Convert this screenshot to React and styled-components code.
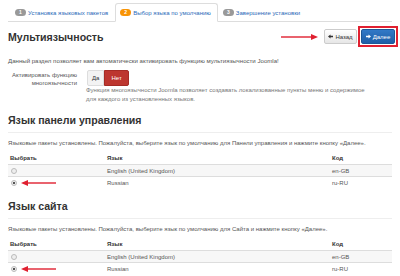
import React from "react";
import styled, { createGlobalStyle } from "styled-components";

const GlobalStyle = createGlobalStyle`
  html, body {
    margin: 0;
    background: #fff;
  }
  body {
    font-family: "Liberation Sans", Arial, sans-serif;
    color: #333;
  }
`;

const Page = styled.div`
  width: 400px;
  height: 276px;
  overflow: hidden;
  padding: 3px 8px 0;
  box-sizing: border-box;
`;

const Tabs = styled.ul`
  display: flex;
  margin: 0;
  padding: 0 0 0 2px;
  list-style: none;
  border-bottom: 1px solid #ddd;
`;

const Tab = styled.li`
  display: flex;
  align-items: center;
  gap: 2px;
  height: 17px;
  padding: 0 6px 0 4px;
  margin-bottom: -1px;
  font-size: 6px;
  color: #2a69b8;
  border: 1px solid ${(p) => (p.$active ? "#ddd" : "transparent")};
  border-bottom-color: ${(p) => (p.$active ? "#fff" : "transparent")};
  border-radius: 3px 3px 0 0;
  background: ${(p) => (p.$active ? "#fff" : "transparent")};
`;

const Badge = styled.span`
  display: inline-block;
  min-width: 7px;
  padding: 1px 2px;
  border-radius: 4px;
  background: ${(p) => p.$color};
  color: #fff;
  font-size: 5px;
  font-weight: bold;
  text-align: center;
  line-height: 5px;
`;

const TitleRow = styled.div`
  display: flex;
  align-items: center;
  justify-content: space-between;
  margin: 2px -6px 0 0;
  height: 25px;
`;

const Title = styled.h2`
  margin: 0;
  font-size: 10.6px;
  font-weight: bold;
  color: #333;
`;

const Actions = styled.div`
  display: flex;
  align-items: center;
  gap: 1px;
`;

const Arrow = styled.svg`
  display: block;
  width: ${(p) => p.$w}px;
  height: 8px;
  margin-right: ${(p) => p.$gap || 0}px;
`;

const Marked = styled.div`
  padding: 1px;
  border: 2px solid #e02030;
`;

const Button = styled.button`
  display: flex;
  align-items: center;
  justify-content: center;
  gap: 2px;
  width: ${(p) => p.$w}px;
  height: 15px;
  padding: 0;
  font-family: inherit;
  font-size: 6px;
  border-radius: 2px;
  border: 1px solid ${(p) => (p.$primary ? "#1d5796" : "#ccc")};
  background: ${(p) =>
    p.$primary
      ? "linear-gradient(#3279c7, #1f5ea6)"
      : "linear-gradient(#fff, #e6e6e6)"};
  color: ${(p) => (p.$primary ? "#fff" : "#333")};
`;

const Icon = styled.svg`
  display: block;
  width: 5px;
  height: 5px;
`;

const Desc = styled.p`
  margin: 8px 0 0;
  font-size: 6.1px;
  color: #555;
`;

const FormRow = styled.div`
  display: flex;
  margin-top: 6px;
`;

const Label = styled.div`
  width: 66px;
  padding-left: 3px;
  padding-top: 2px;
  text-align: right;
  font-size: 6px;
  line-height: 7.5px;
  color: #555;
`;

const Controls = styled.div`
  margin-left: 9px;
`;

const Toggle = styled.div`
  display: flex;
  margin-left: 1px;
`;

const ToggleBtn = styled.span`
  display: flex;
  align-items: center;
  justify-content: center;
  height: 14px;
  padding: 0 ${(p) => (p.$on ? 6 : 4)}px;
  font-size: 6px;
  color: ${(p) => (p.$on ? "#fff" : "#333")};
  background: ${(p) => (p.$on ? "#bd362f" : "#f3f3f3")};
  border: 1px solid ${(p) => (p.$on ? "#a52b25" : "#ddd")};
  border-radius: ${(p) => (p.$on ? "0 2px 2px 0" : "2px 0 0 2px")};
`;

const Help = styled.div`
  margin-top: 0;
  font-size: 6px;
  line-height: 9px;
  color: #777;
`;

const SectionTitle = styled.h3`
  margin: ${(p) => p.$top}px 0 0;
  padding-bottom: 6px;
  font-size: 10.6px;
  font-weight: bold;
  color: #333;
  border-bottom: 1px solid #eee;
`;

const Note = styled.p`
  margin: 7px 0 0;
  font-size: 6px;
  color: #555;
`;

const Table = styled.table`
  width: 100%;
  margin-top: 5px;
  border-collapse: collapse;
  font-size: 6px;
  color: #555;

  th {
    text-align: left;
    font-weight: bold;
    color: #333;
    height: 13px;
    padding: 0 2px;
  }

  td {
    height: 11px;
    padding: 0 2px;
    border-top: 1px solid #ddd;
  }

  tbody tr:nth-child(odd) td {
    background: #f7f7f7;
  }
`;

const Radio = styled.span`
  display: inline-block;
  width: 4px;
  height: 4px;
  border-radius: 50%;
  border: 1px solid #bbb;
  background: ${(p) => (p.$checked ? "radial-gradient(#555 35%, #eee 45%)" : "#eee")};
  vertical-align: middle;
`;

const PickCell = styled.span`
  display: flex;
  align-items: center;
  gap: 4px;
  padding-left: 1px;
`;

const RedArrow = ({ w, gap }) => (
  <Arrow $w={w} $gap={gap} viewBox={`0 0 ${w} 8`}>
    <line x1={gap ? 0 : 6} y1="4" x2={gap ? w - 6 : w} y2="4" stroke="#e02030" strokeWidth="1.4" />
    {gap ? (
      <polygon points={`${w - 7},1 ${w},4 ${w - 7},7`} fill="#e02030" />
    ) : (
      <polygon points="7,1 0,4 7,7" fill="#e02030" />
    )}
  </Arrow>
);

const LeftIcon = () => (
  <Icon viewBox="0 0 10 10">
    <polygon points="0,5 5,1 5,3.5 10,3.5 10,6.5 5,6.5 5,9" fill="currentColor" />
  </Icon>
);

const RightIcon = () => (
  <Icon viewBox="0 0 10 10">
    <polygon points="10,5 5,1 5,3.5 0,3.5 0,6.5 5,6.5 5,9" fill="currentColor" />
  </Icon>
);

const languages = [
  { name: "English (United Kingdom)", code: "en-GB" },
  { name: "Russian", code: "ru-RU", checked: true },
];

const LangTable = () => (
  <Table>
    <colgroup>
      <col style={{ width: "97px" }} />
      <col />
      <col style={{ width: "62px" }} />
    </colgroup>
    <thead>
      <tr>
        <th>Выбрать</th>
        <th>Язык</th>
        <th>Код</th>
      </tr>
    </thead>
    <tbody>
      {languages.map((l) => (
        <tr key={l.code}>
          <td>
            <PickCell>
              <Radio $checked={l.checked} />
              {l.checked && <RedArrow w={35} />}
            </PickCell>
          </td>
          <td>{l.name}</td>
          <td>{l.code}</td>
        </tr>
      ))}
    </tbody>
  </Table>
);

export default function App() {
  return (
    <>
      <GlobalStyle />
      <Page>
        <Tabs>
          <Tab>
            <Badge $color="#999">1</Badge>Установка языковых пакетов
          </Tab>
          <Tab $active>
            <Badge $color="#f89406">2</Badge>Выбор языка по умолчанию
          </Tab>
          <Tab>
            <Badge $color="#999">3</Badge>Завершение установки
          </Tab>
        </Tabs>

        <TitleRow>
          <Title>Мультиязычность</Title>
          <Actions>
            <RedArrow w={37} gap={5} />
            <Button $w={33}>
              <LeftIcon />
              Назад
            </Button>
            <Marked>
              <Button $primary $w={34}>
                <RightIcon />
                Далее
              </Button>
            </Marked>
          </Actions>
        </TitleRow>

        <Desc>
          Данный раздел позволяет вам автоматически активировать функцию мультиязычности Joomla!
        </Desc>

        <FormRow>
          <Label>
            Активировать функцию
            <br />
            многоязычности
          </Label>
          <Controls>
            <Toggle>
              <ToggleBtn>Да</ToggleBtn>
              <ToggleBtn $on>Нет</ToggleBtn>
            </Toggle>
            <Help>
              Функция многоязычности Joomla позволяет создавать локализованные пункты меню и содержимое
              <br />
              для каждого из установленных языков.
            </Help>
          </Controls>
        </FormRow>

        <SectionTitle $top={10}>Язык панели управления</SectionTitle>
        <Note>
          Языковые пакеты установлены. Пожалуйста, выберите язык по умолчанию для Панели управления и нажмите кнопку «Далее».
        </Note>
        <LangTable />

        <SectionTitle $top={12}>Язык сайта</SectionTitle>
        <Note>
          Языковые пакеты установлены. Пожалуйста, выберите язык по умолчанию для Сайта и нажмите кнопку «Далее».
        </Note>
        <LangTable />
      </Page>
    </>
  );
}
